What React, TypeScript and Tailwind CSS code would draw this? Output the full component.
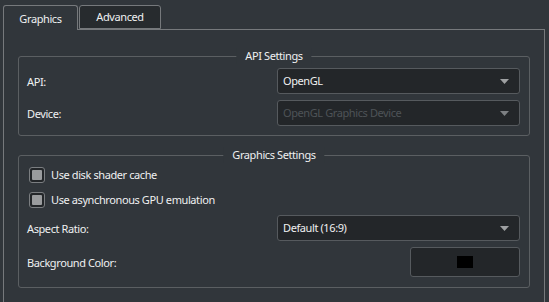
const font = "font-['Noto_Sans',sans-serif] text-[11px] tracking-[-0.4px]";

function Arrow({ dim }: { dim?: boolean }) {
  return (
    <svg width="9" height="5" viewBox="0 0 9 5" className="shrink-0">
      <path d="M0 0h9L4.5 5z" fill={dim ? "#7d8083" : "#9ea0a2"} />
    </svg>
  );
}

function Combo({ value, disabled }: { value: string; disabled?: boolean }) {
  return (
    <div className="flex h-[26px] w-[243px] items-center justify-between rounded-[3px] border border-[#565a5e] bg-[#232629] pl-[5px] pr-[10px]">
      <span className={"pt-[1px] " + (disabled ? "text-[#4e5357]" : "text-[#eff0f1]")}>{value}</span>
      <Arrow dim={disabled} />
    </div>
  );
}

function Check({ label }: { label: string }) {
  return (
    <div className="flex h-[16px] items-center gap-[6px]">
      <div className="flex h-[16px] w-[16px] items-center justify-center rounded-[3px] border border-[#7b7e81] bg-[#232629]">
        <div className="h-[10px] w-[10px] rounded-[1px] bg-[#9a9c9e]" />
      </div>
      <span className="pt-[1px] text-[#eff0f1]">{label}</span>
    </div>
  );
}

function Group({ title, children, className }: { title: string; children: React.ReactNode; className?: string }) {
  return (
    <div className={"relative rounded-[3px] border border-[#5b5f62] " + (className ?? "")}>
      <span className="absolute left-1/2 top-[-9px] -translate-x-1/2 bg-[#31363b] px-[9px] leading-[16px] text-[#eff0f1]">
        {title}
      </span>
      {children}
    </div>
  );
}

export default function App() {
  return (
    <div className={"h-[302px] w-[549px] overflow-hidden bg-[#31363b] " + font}>
      <div className="flex items-end pl-[3px] pt-[5px]">
        <div className="relative z-10 -mb-px flex h-[25px] w-[75px] items-center justify-center rounded-t-[3px] border border-b-0 border-[#76797c] bg-[#31363b] pt-[2px] text-[#eff0f1]">
          Graphics
        </div>
        <div className="ml-px flex h-[24px] w-[82px] items-center justify-center rounded-t-[3px] border border-[#76797c] bg-[#272b2e] pt-[1px] text-[#eff0f1]">
          Advanced
        </div>
      </div>
      <div className="ml-[3px] h-[300px] w-[542px] border border-[#76797c] px-[14px] pt-[26px]">
        <Group title="API Settings" className="h-[80px]">
          <div className="grid grid-cols-[1fr_243px] gap-y-[6px] pl-[8px] pr-[9px] pt-[11px]">
            <span className="self-center pt-[2px] text-[#eff0f1]">API:</span>
            <Combo value="OpenGL" />
            <span className="self-center pt-[2px] text-[#eff0f1]">Device:</span>
            <Combo value="OpenGL Graphics Device" disabled />
          </div>
        </Group>
        <Group title="Graphics Settings" className="mt-[19px] h-[133px]">
          <div className="flex flex-col pl-[10px] pr-[9px] pt-[11px]">
            <Check label="Use disk shader cache" />
            <div className="mt-[9px]">
              <Check label="Use asynchronous GPU emulation" />
            </div>
            <div className="mt-[7px] flex items-center justify-between">
              <span className="-ml-[2px] pt-[2px] text-[#eff0f1]">Aspect Ratio:</span>
              <Combo value="Default (16:9)" />
            </div>
            <div className="mt-[6px] flex items-center justify-between">
              <span className="-ml-[2px] pt-[2px] text-[#eff0f1]">Background Color:</span>
              <div className="flex h-[30px] w-[110px] items-center justify-center rounded-[3px] border border-[#565a5e] bg-[#232629]">
                <div className="h-[12px] w-[16px] bg-black" />
              </div>
            </div>
          </div>
        </Group>
      </div>
    </div>
  );
}
